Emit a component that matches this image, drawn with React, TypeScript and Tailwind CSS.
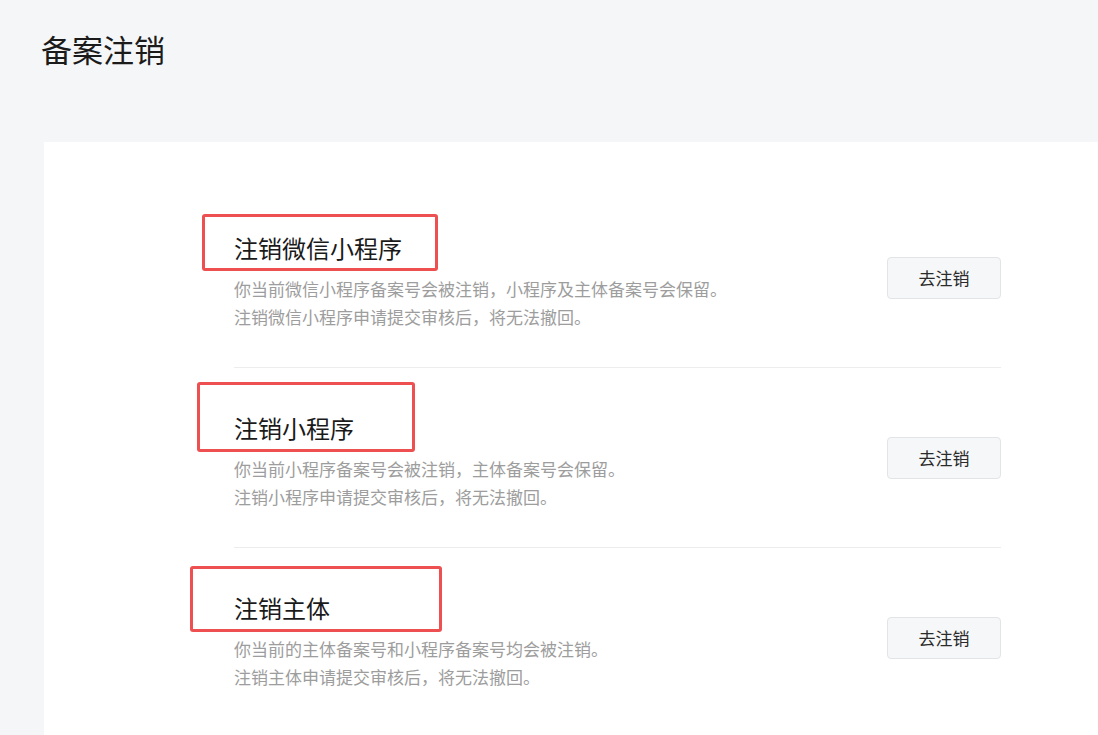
import React from "react";

type Item = {
  title: string;
  lines: string[];
  box: { left: number; top: number; width: number; height: number };
};

const items: Item[] = [
  {
    title: "注销微信小程序",
    lines: ["你当前微信小程序备案号会被注销，小程序及主体备案号会保留。", "注销微信小程序申请提交审核后，将无法撤回。"],
    box: { left: -32, top: -18, width: 236, height: 57 },
  },
  {
    title: "注销小程序",
    lines: ["你当前小程序备案号会被注销，主体备案号会保留。", "注销小程序申请提交审核后，将无法撤回。"],
    box: { left: -37, top: -30, width: 218, height: 70 },
  },
  {
    title: "注销主体",
    lines: ["你当前的主体备案号和小程序备案号均会被注销。", "注销主体申请提交审核后，将无法撤回。"],
    box: { left: -44, top: -26, width: 252, height: 66 },
  },
];

export default function App() {
  return (
    <div
      className="w-[1098px] h-[735px] overflow-hidden bg-[#f5f6f8] pt-[25px]"
      style={{ fontFamily: '"Microsoft YaHei", "Noto Sans CJK SC", "Noto Sans", sans-serif' }}
    >
      <h1 className="pl-[41px] text-[31px] leading-[48px] font-normal text-[#1b1b1b]">备案注销</h1>
      <div className="ml-[44px] mt-[69px] bg-white h-[600px] pt-[46px] pl-[190px] pr-[97px]">
        {items.map((it, i) => (
          <div
            key={it.title}
            className={`flex items-start justify-between pt-[44px] pb-[36px] ${i > 0 ? "border-t border-[#ededed]" : ""}`}
          >
            <div>
              <div className="relative">
                <div className="text-[24px] leading-[32px] text-[#1a1a1a]">{it.title}</div>
                <div
                  className="absolute border-[3px] border-[#ee4f50] rounded-[3px]"
                  style={{ left: it.box.left, top: it.box.top, width: it.box.width, height: it.box.height }}
                />
              </div>
              <div className="mt-[11px] text-[17px] leading-[28px] text-[#9d9d9d]">
                {it.lines.map((l) => (
                  <div key={l}>{l}</div>
                ))}
              </div>
            </div>
            <button className="mt-[25px] w-[114px] h-[42px] border border-[#e3e4e6] bg-[#f6f7f8] rounded-[4px] text-[17px] text-[#2a2a2a]">
              去注销
            </button>
          </div>
        ))}
      </div>
    </div>
  );
}
